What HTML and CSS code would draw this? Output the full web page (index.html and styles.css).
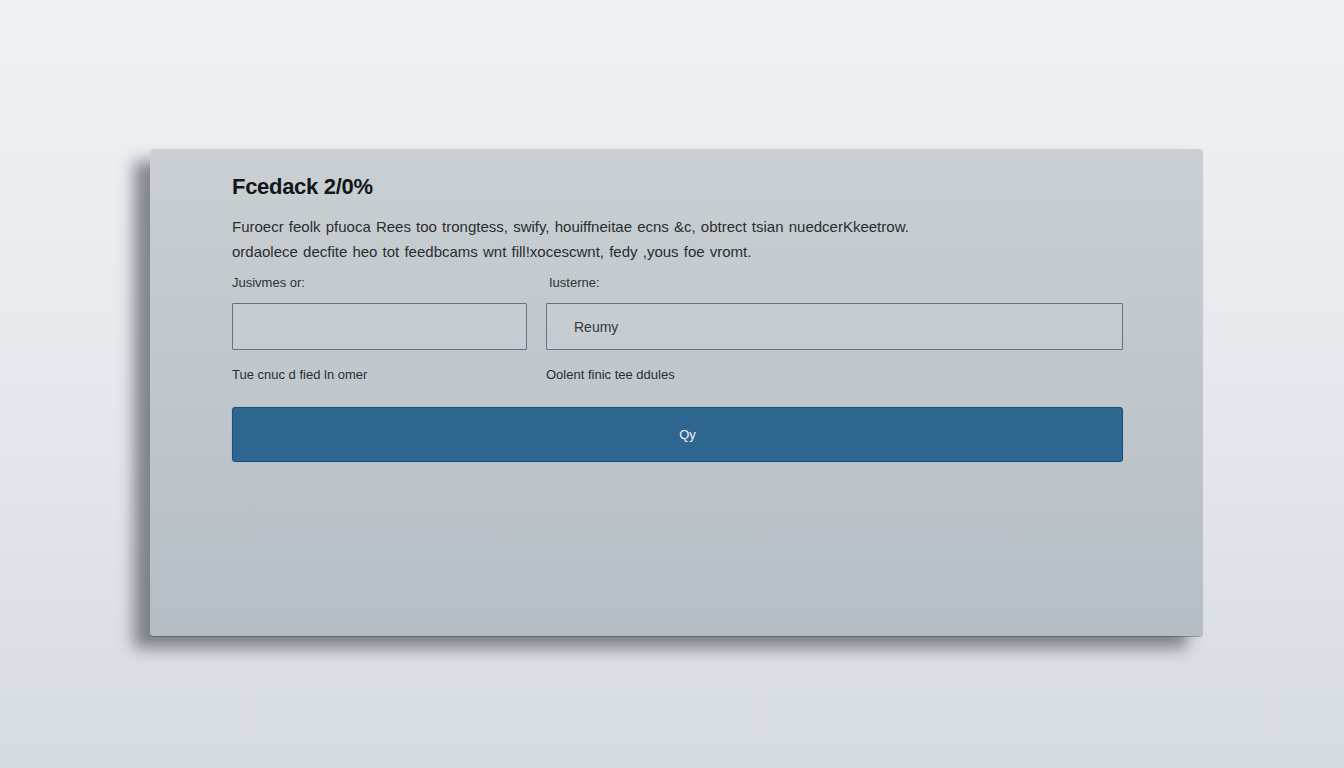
FILE: index.html
```html
<!DOCTYPE html>
<html lang="en">
<head>
    <meta charset="UTF-8">
    <meta name="viewport" content="width=device-width, initial-scale=1.0">
    <title>Feedback</title>
    <link rel="stylesheet" href="styles.css">
</head>
<body>
    <div class="card">
        <h1 class="title">Fcedack 2/0%</h1>
        <p class="intro">
            Furoecr feolk pfuoca Rees too trongtess, swify, houiffneitae ecns &amp;c,  obtrect tsian nuedcerKkeetrow.<br>
            ordaolece decfite heo tot feedbcams wnt fill!xocescwnt, fedy ,yous foe vromt.
        </p>
        <form class="fields">
            <div class="field">
                <label class="label">Jusivmes or:</label>
                <input class="input" type="text">
                <div class="hint">Tue cnuc d fied ln omer</div>
            </div>
            <div class="field">
                <label class="label">Iusterne:</label>
                <input class="input" type="text" placeholder="Reumy">
                <div class="hint">Oolent finic tee ddules</div>
            </div>
            <button class="submit" type="button">Qy</button>
        </form>
    </div>
</body>
</html>
```

FILE: styles.css
```css
html, body {
    height: 100%;
}
body {
    margin: 0;
    font-family: 'Liberation Sans', Arial, sans-serif;
    background: linear-gradient(180deg, #eff2f5 0%, #e3e7eb 60%, #d6dbe0 100%);
    overflow: hidden;
}
.card {
    box-sizing: border-box;
    width: 1053px;
    height: 487px;
    margin: 149px 0 0 150px;
    padding: 24px 80px 0 82px;
    border-radius: 4px;
    background: linear-gradient(180deg, #c9cfd3 0%, #bfc7cc 50%, #b5bec5 100%);
    box-shadow: -16px 12px 16px rgba(45, 50, 60, 0.55), 0 1px 0 #9aa3aa;
}
.title {
    margin: 0;
    font-size: 22px;
    line-height: 28px;
    font-weight: bold;
    color: #141618;
    letter-spacing: -0.3px;
}
.intro {
    margin: 13px 0 0 0;
    font-size: 15px;
    line-height: 25px;
    color: #2a2d30;
    word-spacing: 1px;
}
.fields {
    display: grid;
    grid-template-columns: 295px 577px;
    column-gap: 19px;
    margin-top: 10px;
}
.field {
    display: flex;
    flex-direction: column;
}
.label {
    font-size: 13px;
    line-height: 18px;
    color: #2e3135;
}
.field:nth-child(2) .label {
    padding-left: 3px;
}
.input {
    box-sizing: border-box;
    height: 47px;
    margin-top: 11px;
    padding: 0 27px;
    border: 1px solid #5f7488;
    border-radius: 1px;
    background: rgba(210, 216, 220, 0.3);
    font-family: inherit;
    font-size: 14px;
    color: #2e3135;
    outline: none;
}
.input::placeholder {
    color: #34383c;
}
.hint {
    margin-top: 17px;
    font-size: 13px;
    line-height: 16px;
    color: #2b2e31;
}
.submit {
    grid-column: 1 / span 2;
    height: 55px;
    margin-top: 24px;
    padding-left: 26px;
    border: 1px solid #1f4f74;
    border-radius: 3px;
    background: #2e6690;
    box-shadow: 0 0 0 1px rgba(150, 190, 215, 0.5);
    color: #f0f4f7;
    font-family: inherit;
    font-size: 13px;
}
```
